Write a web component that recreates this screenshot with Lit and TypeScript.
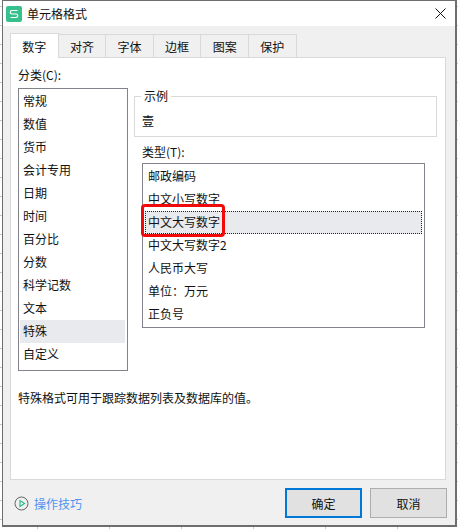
import { LitElement, html, css } from "lit";
import { customElement } from "lit/decorators.js";

const categories = ["常规", "数值", "货币", "会计专用", "日期", "时间", "百分比", "分数", "科学记数", "文本", "特殊", "自定义"];
const types = ["邮政编码", "中文小写数字", "中文大写数字", "中文大写数字2", "人民币大写", "单位：万元", "正负号"];
const tabs = ["数字", "对齐", "字体", "边框", "图案", "保护"];

@customElement("app-root")
export class AppRoot extends LitElement {
  static styles = css`
    :host {
      display: block;
      width: 458px;
      height: 529px;
      overflow: hidden;
      font-family: "Noto Sans CJK SC", "Liberation Sans", sans-serif;
      font-size: 12px;
      color: #111;
      background-color: #fff;
      background-image:
        linear-gradient(#c8c8d0 1px, transparent 1px),
        linear-gradient(90deg, #c8c8d0 1px, transparent 1px);
      background-size: 72px 19px;
      background-position: 37px 6px;
    }
    .window {
      position: relative;
      box-sizing: border-box;
      width: 455px;
      height: 527px;
      margin-left: 2px;
      border: 1px solid #6e6e6e;
      border-width: 1px 2px 2px 1px;
      background: #f0f0f0;
      display: flex;
      flex-direction: column;
    }
    .titlebar {
      height: 25px;
      flex: none;
      background: #fff;
      display: flex;
      align-items: center;
      padding: 0 6px 0 3px;
    }
    .logo {
      width: 16px;
      height: 16px;
      flex: none;
    }
    .title {
      margin-left: 5px;
      flex: 1;
    }
    .close {
      width: 11px;
      height: 11px;
      margin-right: 3px;
    }
    .content {
      flex: 1;
      display: flex;
      flex-direction: column;
      padding: 7px 9px 0 7px;
      min-height: 0;
    }
    .tabs {
      display: flex;
      height: 24px;
      flex: none;
      position: relative;
      z-index: 1;
    }
    .tab {
      box-sizing: border-box;
      width: 48.6px;
      height: 23px;
      margin-top: 1px;
      margin-right: -1px;
      border: 1px solid #d9d9d9;
      border-bottom: none;
      background: #f0f0f0;
      display: flex;
      align-items: center;
      justify-content: center;
    }
    .tab.active {
      height: 25px;
      margin-top: 0;
      background: #fff;
      position: relative;
      z-index: 1;
    }
    .panel {
      box-sizing: border-box;
      height: 423px;
      flex: none;
      border: 1px solid #d9d9d9;
      background: #fff;
      padding: 8px 7px 0 7px;
    }
    .columns {
      display: flex;
      margin-top: 4px;
    }
    .label {
      height: 18px;
      line-height: 18px;
    }
    .listbox {
      box-sizing: border-box;
      border: 1px solid #82828a;
      background: #fff;
    }
    .categories {
      width: 110px;
      height: 283px;
      flex: none;
      padding: 1px 2px 1px 1px;
    }
    .row {
      height: 23px;
      line-height: 21px;
      padding-left: 3px;
      white-space: nowrap;
    }
    .row.selected {
      background: #e8eaed;
    }
    .row.focused {
      outline: 1px dotted #222;
      outline-offset: -1px;
    }
    .right {
      margin-left: 6px;
      width: 303px;
    }
    fieldset.sample {
      box-sizing: border-box;
      width: 303px;
      height: 49px;
      margin: 0;
      padding: 0 0 0 7px;
      border: 1px solid #d9d9d9;
      background: #fff;
    }
    fieldset.sample legend {
      padding: 0 3px;
      margin-left: -1px;
      line-height: 16px;
    }
    .sample-value {
      line-height: 18px;
      margin-top: 8px;
    }
    .type-label {
      margin: 6px 0 2px 8px;
    }
    .types {
      width: 283px;
      height: 165px;
      margin-left: 8px;
      padding: 1px 2px;
    }
    .note {
      margin-top: 18px;
      line-height: 18px;
    }
    .footer {
      flex: 1;
      display: flex;
      align-items: center;
      padding: 1px 0 0 4px;
    }
    .tips {
      display: flex;
      align-items: center;
      color: #4f93ef;
      gap: 5px;
    }
    .tips svg {
      width: 15px;
      height: 15px;
    }
    .buttons {
      margin-left: auto;
      margin-right: -1px;
      display: flex;
      gap: 8px;
    }
    button {
      box-sizing: border-box;
      width: 77px;
      height: 30px;
      border: 1px solid #adadad;
      background: #e1e1e1;
      font: inherit;
      color: inherit;
      padding: 0;
    }
    button.primary {
      border: 2px solid #0078d7;
    }
    .callout {
      position: absolute;
      left: 138px;
      top: 203px;
      width: 84px;
      height: 33px;
      box-sizing: border-box;
      border: 3px solid #f00a0a;
      border-radius: 4px;
    }
  `;

  render() {
    return html`
      <div class="window">
        <div class="titlebar">
          <svg class="logo" viewBox="0 0 16 16">
            <rect width="16" height="16" rx="2" fill="#35c08e" />
            <path d="M11.5 4.5H6a1.75 1.75 0 0 0 0 3.5h4a1.75 1.75 0 0 1 0 3.5H4.5" fill="none" stroke="#fff" stroke-width="1.2" />
          </svg>
          <span class="title">单元格格式</span>
          <svg class="close" viewBox="0 0 11 11">
            <path d="M.5.5l10 10M10.5.5l-10 10" stroke="#111" fill="none" />
          </svg>
        </div>
        <div class="content">
          <div class="tabs">
            ${tabs.map((t, i) => html`<div class="tab ${i === 0 ? "active" : ""}">${t}</div>`)}
          </div>
          <div class="panel">
            <div class="label">分类(C):</div>
            <div class="columns">
              <div class="listbox categories">
                ${categories.map((c) => html`<div class="row ${c === "特殊" ? "selected" : ""}">${c}</div>`)}
              </div>
              <div class="right">
                <fieldset class="sample">
                  <legend>示例</legend>
                  <div class="sample-value">壹</div>
                </fieldset>
                <div class="label type-label">类型(T):</div>
                <div class="listbox types">
                  ${types.map((t) => html`<div class="row ${t === "中文大写数字" ? "selected focused" : ""}">${t}</div>`)}
                </div>
              </div>
            </div>
            <div class="note">特殊格式可用于跟踪数据列表及数据库的值。</div>
          </div>
          <div class="footer">
            <div class="tips">
              <svg viewBox="0 0 15 15">
                <circle cx="7.5" cy="7.5" r="6.5" fill="none" stroke="#666" />
                <path d="M6 4.5v6l4.5-3z" fill="none" stroke="#2dbb86" stroke-width="1.2" />
              </svg>
              操作技巧
            </div>
            <div class="buttons">
              <button class="primary">确定</button>
              <button>取消</button>
            </div>
          </div>
        </div>
        <div class="callout"></div>
      </div>
    `;
  }
}
